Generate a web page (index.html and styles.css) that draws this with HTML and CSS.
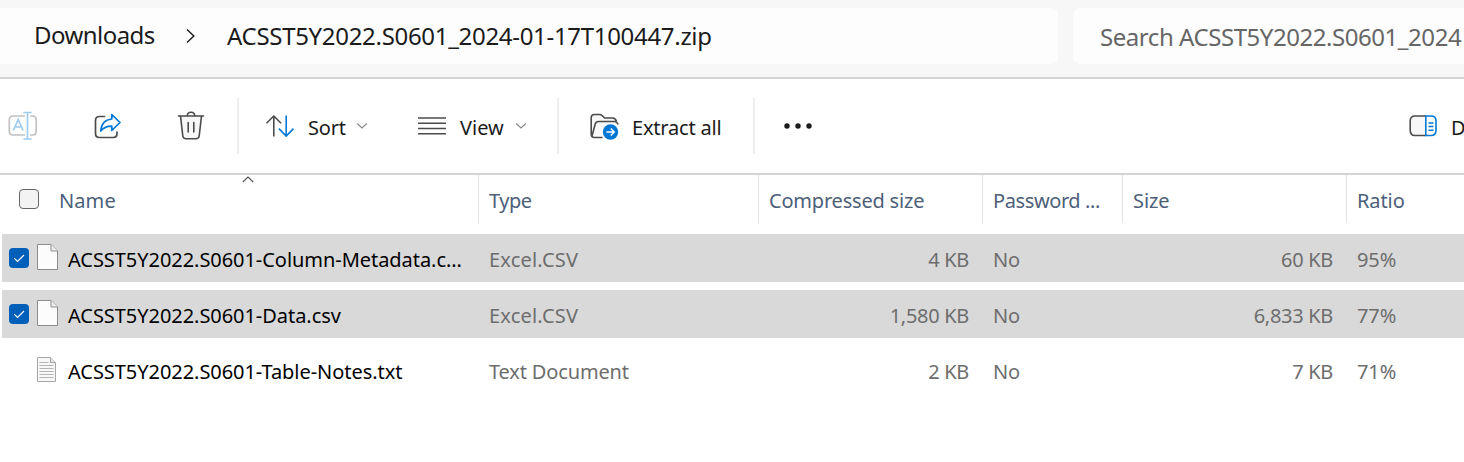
FILE: index.html
```html
<!DOCTYPE html>
<html lang="en">
<head>
<meta charset="utf-8">
<title>ACSST5Y2022.S0601_2024-01-17T100447.zip</title>
<link rel="stylesheet" href="styles.css">
</head>
<body>
<div class="window">
  <header class="topbar">
    <nav class="address">
      <span class="crumb crumb-parent">Downloads</span>
      <svg class="crumb-arrow" width="12" height="16" viewBox="0 0 12 16"><path d="M2 1.500 8.800 8 2 14.500" fill="none" stroke="#222" stroke-width="1.500"/></svg>
      <span class="crumb crumb-current">ACSST5Y2022.S0601_2024-01-17T100447.zip</span>
    </nav>
    <div class="search">Search ACSST5Y2022.S0601_2024</div>
  </header>

  <div class="toolbar">
    <div class="group icons">
      <svg class="rename" width="30" height="30" viewBox="0 0 30 30" fill="none" stroke-width="1.700">
        <path d="M17 5H5.200Q1.300 5 1.300 9V20Q1.300 24 5.200 24H17M22 5H24.500Q28.200 5 28.200 9V20Q28.200 24 24.500 24H22" stroke="#c2c2c2"/>
        <path d="M5.400 19.500 10.200 8.500 15 19.500M7 16H13.500M19.500 1.500V28M15.300 1.500H23.700M15.300 28H23.700" stroke="#9fcdf0"/>
      </svg>
      <svg class="share" width="28" height="28" viewBox="0 0 28 28" fill="none" stroke-width="1.700" stroke-linejoin="round" stroke-linecap="round">
        <path d="M10.500 3.500H5.500Q1.500 3.500 1.500 7.500V20.500Q1.500 24.500 5.500 24.500H19Q23 24.500 23 20.500V19" stroke="#4b4b4b"/>
        <path d="M17.800 1.500 26 9.500 17.800 17.500V13.200Q11 13 6.800 18Q7.500 7 17.800 6Z" fill="#fafcfe" stroke="#0078d4"/>
      </svg>
      <svg class="trash" width="28" height="30" viewBox="0 0 28 30" fill="none" stroke="#4b4b4b" stroke-width="1.600" stroke-linecap="round">
        <path d="M3.500 5.200 5.800 25Q6.200 27.800 9 27.800H19Q21.800 27.800 22.200 25L24.500 5.200" fill="#f7f7f7"/>
        <path d="M1.500 5H26.500M10.300 5Q10.300 1.200 14 1.200T17.700 5M11.200 11.500V21M16.800 11.500V21"/>
      </svg>
    </div>
    <div class="group sort-view">
      <div class="command sort">
        <svg width="30" height="24" viewBox="0 0 30 24" fill="none" stroke-width="1.600">
          <path d="M8.800 22.500V2M1.500 9.200 8.800 2 16.100 9.200" stroke="#4b4b4b"/>
          <path d="M21.200 1.500V22M13.900 14.600 21.200 22 28.500 14.600" stroke="#0078d4"/>
        </svg>
        <span class="label">Sort</span>
        <svg class="caret" width="12" height="8" viewBox="0 0 12 8"><path d="M1.200 1.500 6 6 10.800 1.500" fill="none" stroke="#888" stroke-width="1.100"/></svg>
      </div>
      <div class="command view">
        <svg width="28" height="20" viewBox="0 0 28 20"><path d="M0 2H28M0 7.200H28M0 12.500H28M0 17.700H28" stroke="#4b4b4b" stroke-width="1.500"/></svg>
        <span class="label">View</span>
        <svg class="caret" width="12" height="8" viewBox="0 0 12 8"><path d="M1.200 1.500 6 6 10.800 1.500" fill="none" stroke="#888" stroke-width="1.100"/></svg>
      </div>
    </div>
    <div class="group extract-group">
      <div class="command extract">
        <svg width="30" height="28" viewBox="0 0 30 28" fill="none" stroke="#4b4b4b" stroke-width="1.600">
          <path d="M12.500 24.500H4.500Q1.200 24.500 1.200 21V4.500Q1.200 1.500 4.500 1.500H9.500Q11 1.500 12.200 2.700L14.800 5H22.500Q25.500 5 26.500 8.500" fill="#f8f8f8"/>
          <path d="M2 23 5.200 11Q6 8.500 8.500 8.500H24.500Q27 8.500 28 11.500"/>
          <circle cx="20.500" cy="19" r="9" fill="#fff" stroke="none"/>
          <circle cx="20.500" cy="19" r="7.700" fill="#0078d4" stroke="none"/>
          <path d="M16.500 19H24M20.800 15.500 24.200 19 20.800 22.500" stroke="#fff" stroke-width="1.500"/>
        </svg>
        <span class="label">Extract all</span>
      </div>
    </div>
    <div class="group more">
      <svg width="30" height="6" viewBox="0 0 30 6" fill="#1b1b1b"><circle cx="4" cy="3" r="2.700"/><circle cx="15" cy="3" r="2.700"/><circle cx="26" cy="3" r="2.700"/></svg>
    </div>
    <div class="command details">
      <svg width="28" height="24" viewBox="0 0 28 24" fill="none" stroke-width="1.600">
        <path d="M17 2H6Q1.200 2 1.200 7V16Q1.200 21.500 6 21.500H17" fill="#f7f7f7" stroke="#4b4b4b"/>
        <path d="M16.800 2H22Q27 2 27 7V16Q27 21.500 22 21.500H16.800ZM19.500 9H24.500M19.500 12.500H24.500M19.500 16.200H24.500" stroke="#0078d4"/>
      </svg>
      <span class="label">D</span>
    </div>
  </div>

  <main class="files">
    <div class="grid head">
      <div class="cell head-name">
        <span class="box"></span><span class="t-name">Name</span>
        <svg class="sorted" width="12" height="7" viewBox="0 0 12 7"><path d="M.8 6 6 1 11.200 6" fill="none" stroke="#555" stroke-width="1.100"/></svg>
      </div>
      <div class="cell t-type">Type</div>
      <div class="cell t-comp">Compressed size</div>
      <div class="cell t-pass">Password ...</div>
      <div class="cell">Size</div>
      <div class="cell">Ratio</div>
    </div>
    <div class="grid row selected">
      <div class="cell name">
        <svg class="check" width="20" height="20" viewBox="0 0 20 20"><rect width="20" height="20" rx="4" fill="#005fb8"/><path d="M5.200 10.200 8.500 13.500 15 7" fill="none" stroke="#fff" stroke-width="1.100"/></svg>
        <svg class="doc" width="21" height="26" viewBox="0 0 21 26"><path d="M.5.500H14L20.500 7V25.500H.5Z" fill="#fcfcfc" stroke="#8c8c8c"/><path d="M14 .5V7H20.500" fill="#eee" stroke="#8c8c8c"/></svg>
        <span>ACSST5Y2022.S0601-Column-Metadata.c...</span>
      </div>
      <div class="cell excel">Excel.CSV</div><div class="cell num">4 KB</div><div class="cell">No</div><div class="cell num">60 KB</div><div class="cell">95%</div>
    </div>
    <div class="grid row selected">
      <div class="cell name">
        <svg class="check" width="20" height="20" viewBox="0 0 20 20"><rect width="20" height="20" rx="4" fill="#005fb8"/><path d="M5.200 10.200 8.500 13.500 15 7" fill="none" stroke="#fff" stroke-width="1.100"/></svg>
        <svg class="doc" width="21" height="26" viewBox="0 0 21 26"><path d="M.5.500H14L20.500 7V25.500H.5Z" fill="#fcfcfc" stroke="#8c8c8c"/><path d="M14 .5V7H20.500" fill="#eee" stroke="#8c8c8c"/></svg>
        <span>ACSST5Y2022.S0601-Data.csv</span>
      </div>
      <div class="cell excel">Excel.CSV</div><div class="cell num">1,580 KB</div><div class="cell">No</div><div class="cell num">6,833 KB</div><div class="cell">77%</div>
    </div>
    <div class="grid row">
      <div class="cell name">
        <span class="check"></span>
        <svg class="doc" width="21" height="26" viewBox="0 0 21 26"><path d="M.5 1.500H13.500L18.500 6.500V25.500H.5Z" fill="#f8f8f8" stroke="#a6a6a6"/><path d="M13.500 1.500V6.500H18.500" fill="#e4e4e4" stroke="#a6a6a6"/><path d="M2.500 6.500H11.500M2.500 9.500H16.500M2.500 12.500H16.500M2.500 15.500H16.500M2.500 18.500H16.500M2.500 21.500H16.500" stroke="#b4b4b4"/></svg>
        <span>ACSST5Y2022.S0601-Table-Notes.txt</span>
      </div>
      <div class="cell text-type">Text Document</div><div class="cell num">2 KB</div><div class="cell">No</div><div class="cell num">7 KB</div><div class="cell">71%</div>
    </div>
  </main>
</div>
</body>
</html>
```
FILE: styles.css
```css
* { box-sizing: border-box; }
body { margin: 0; }
svg { display: block; flex: none; }

.window {
  width: 1464px;
  height: 462px;
  overflow: hidden;
  background: #fff;
  font: 20px/28px "Noto Sans", "Open Sans", sans-serif;
  color: #1b1b1b;
  white-space: nowrap;
}

/* Address bar and search */
.topbar {
  display: flex;
  gap: 15px;
  height: 79px;
  padding-top: 8px;
  background: #f7f7f7;
  border-bottom: 2px solid #d4d4d4;
  font-size: 24px;
  line-height: 34px;
}
.address {
  display: flex;
  align-items: center;
  width: 1058px;
  height: 56px;
  padding-left: 34px;
  background: #fdfdfd;
  border-radius: 0 7px 7px 0;
}
.crumb-parent { width: 151px; letter-spacing: -.55px; padding-bottom: 3px; }
.crumb-arrow { margin-right: 30px; }
.crumb-current { letter-spacing: -.31px; padding-bottom: 1px; }
.search {
  flex: 1;
  height: 56px;
  padding: 12px 0 0 27px;
  overflow: hidden;
  background: #fdfdfd;
  border-radius: 7px 0 0 7px;
  color: #666;
  letter-spacing: -.45px;
}

/* Command bar */
.toolbar {
  display: flex;
  align-items: center;
  height: 96px;
  padding-bottom: 1px;
  border-bottom: 2px solid #d4d4d4;
}
.group {
  display: flex;
  align-items: center;
  height: 56px;
  border-right: 2px solid #ededed;
}
.command { display: flex; align-items: center; }
.label { padding-top: 5px; }
.icons { width: 239px; padding-left: 8px; }
.share { margin: 2px 0 0 56px; }
.trash { margin-left: 55px; }
.sort-view { width: 320px; padding-left: 26px; }
.sort { width: 152px; }
.sort .label { width: 49px; margin-left: 13px; letter-spacing: -.17px; }
.caret { margin: 1px 0 0 -1px; }
.view .label { width: 56px; margin-left: 14px; }
.view { margin-left: 1px; }
.extract-group { width: 196px; padding-left: 30px; }
.extract > svg { margin: 2px 0 0 1px; }
.extract .label { margin-left: 12px; letter-spacing: -.2px; }
.more { border: 0; padding: 1px 0 0 28px; }
.details { width: 55px; margin-left: auto; overflow: hidden; }
.details .label { margin-left: 14px; }

/* File list */
.grid {
  display: grid;
  grid-template-columns: 478px 280px 224px 140px 224px 118px;
}
.cell { padding: 12px 0 0 11px; letter-spacing: -.1px; }
.head { height: 48px; margin-bottom: 11px; color: #4c607a; }
.head .cell + .cell { border-left: 1px solid #e2e2e2; padding-left: 10px; }
.head-name {
  position: relative;
  display: flex;
  align-items: flex-start;
  padding-left: 19px;
}
.box {
  width: 20px;
  height: 20px;
  margin: 2px 20px 0 0;
  border: 1px solid #666;
  border-radius: 4px;
  background: #f3f3f3;
}
.sorted { position: absolute; left: 242px; top: 1px; }
.t-name { letter-spacing: .1px; }
.head .t-type { letter-spacing: -.5px; }
.head .t-comp { letter-spacing: -.2px; }
.head .t-pass { letter-spacing: -.4px; }

.row { position: relative; height: 48px; margin-bottom: 8px; color: #6d6d6d; }
.selected {
  background: linear-gradient(#d9d9d9, #d9d9d9) no-repeat 2px 0;
}
.row .name {
  display: flex;
  padding-left: 9px;
  color: #000;
  letter-spacing: -.05px;
}
.check { width: 20px; height: 20px; margin-top: 2px; }
.doc { margin: -2px 10px 0 8px; }
.num { padding-right: 13px; text-align: right; letter-spacing: -.3px; }
.row .excel { letter-spacing: .2px; }
.row .text-type { letter-spacing: -.15px; }
```
